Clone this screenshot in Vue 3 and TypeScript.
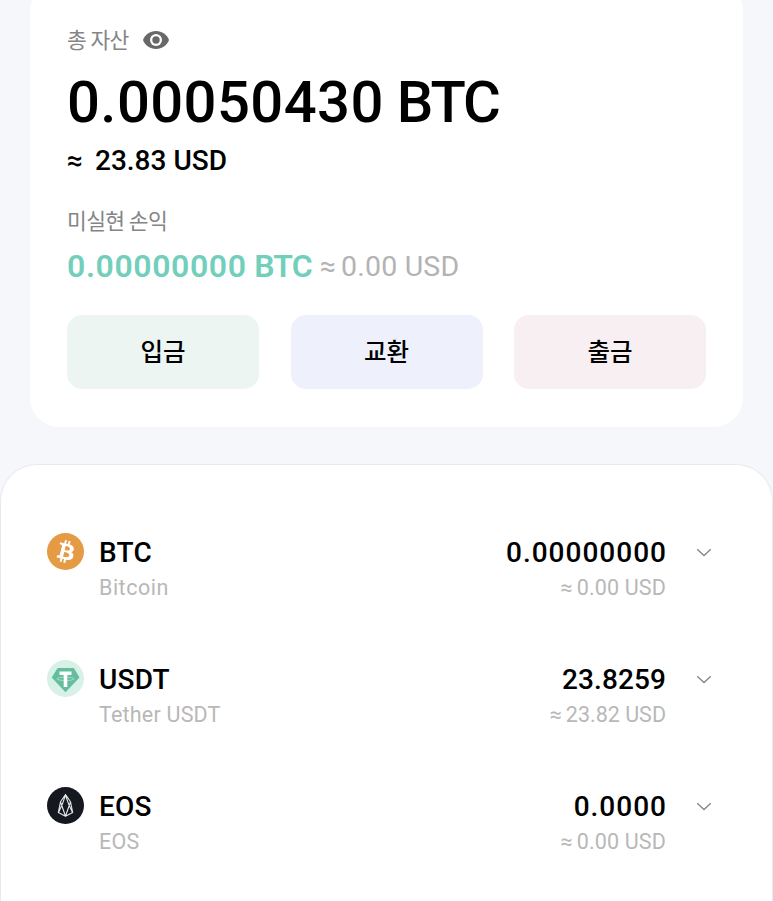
<script setup lang="ts">
type Coin = 'btc' | 'usdt' | 'eos'

interface Asset {
  id: Coin
  symbol: string
  name: string
  amount: string
  value: string
}

interface Action {
  id: string
  label: string
}

const actions: Action[] = [
  { id: 'deposit', label: '입금' },
  { id: 'exchange', label: '교환' },
  { id: 'withdraw', label: '출금' },
]

const assets: Asset[] = [
  { id: 'btc', symbol: 'BTC', name: 'Bitcoin', amount: '0.00000000', value: '0.00 USD' },
  { id: 'usdt', symbol: 'USDT', name: 'Tether USDT', amount: '23.8259', value: '23.82 USD' },
  { id: 'eos', symbol: 'EOS', name: 'EOS', amount: '0.0000', value: '0.00 USD' },
]
</script>

<template>
  <main class="screen">
    <section class="summary">
      <div class="label total-label">
        <span class="label-text">총 자산</span>
        <svg class="eye" viewBox="0 0 26 18">
          <path d="M13 0C7 0 2 3.700 0 9c2 5.300 7 9 13 9s11-3.700 13-9C24 3.700 19 0 13 0z" fill="#686868" />
          <circle cx="13" cy="9" r="6" fill="#fff" />
          <circle cx="13" cy="9" r="3.700" fill="#686868" />
        </svg>
      </div>
      <h1 class="total">0.00050430 <span class="total-unit">BTC</span></h1>
      <p class="total-usd"><span class="approx">≈</span><span>23.83 USD</span></p>
      <div class="label pnl-label"><span class="label-text">미실현 손익</span></div>
      <p class="pnl">
        <strong class="pnl-btc">0.00000000 <span class="pnl-unit">BTC</span></strong>
        <span class="pnl-approx">≈</span>
        <span class="pnl-usd">0.00 USD</span>
      </p>
      <div class="actions">
        <button v-for="a in actions" :key="a.id" type="button" class="action" :class="a.id">{{ a.label }}</button>
      </div>
    </section>

    <section class="assets">
      <article v-for="c in assets" :key="c.id" class="asset" :class="`asset-${c.id}`">
        <svg v-if="c.id === 'btc'" class="coin" viewBox="0 0 32 32">
          <circle cx="16" cy="16" r="16" fill="#e59a44" />
          <path
            fill="#fff"
            d="M23.189 14.020c.314-2.096-1.283-3.223-3.465-3.975l.708-2.840-1.728-.430-.690 2.765c-.454-.114-.920-.220-1.385-.326l.695-2.783L15.596 6l-.708 2.839c-.376-.086-.746-.170-1.104-.260l.002-.009-2.384-.595-.460 1.846s1.283.294 1.256.312c.700.175.826.638.805 1.006l-.806 3.235c.048.012.110.030.180.057l-.183-.045-1.130 4.532c-.086.212-.303.531-.793.410.018.025-1.256-.313-1.256-.313l-.858 1.978 2.250.561c.418.105.828.215 1.231.318l-.715 2.872 1.727.430.708-2.840c.472.127.930.245 1.378.357l-.706 2.828 1.728.430.715-2.866c2.948.558 5.164.333 6.097-2.333.752-2.146-.037-3.385-1.588-4.192 1.130-.260 1.980-1.003 2.207-2.538zm-3.950 5.538c-.533 2.147-4.148.986-5.320.695l.950-3.805c1.172.293 4.929.872 4.370 3.110zm.535-5.569c-.487 1.953-3.495.960-4.470.717l.860-3.450c.975.243 4.118.696 3.610 2.733z"
          />
        </svg>
        <svg v-else-if="c.id === 'usdt'" class="coin" viewBox="0 0 37 37">
          <circle cx="18.500" cy="18.500" r="18.500" fill="#d7f1e7" />
          <path d="M10.600 8h16.200l5.700 9.500-14 14.800L4.700 17.500z" fill="#64bd9e" />
          <ellipse cx="18.500" cy="18.800" rx="8.600" ry="1.700" fill="none" stroke="#b9e3d5" stroke-width=".8" />
          <path d="M12.500 11.500h12v3.400h-4.200V27h-3.600V14.900h-4.200z" fill="#fff" />
        </svg>
        <svg v-else class="coin" viewBox="0 0 37 37">
          <circle cx="18.500" cy="18.500" r="18.500" fill="#15181e" />
          <path
            d="M18.500 7.500l-5 7.300-2.200 10.700 7.200 3.700 7.200-3.700-2.200-10.700zM13.500 14.800l5 14.400 5-14.400M18.500 8l-3.300 9.600-3.600 7.600M18.500 8l3.300 9.600 3.600 7.600"
            fill="none"
            stroke="#e4e6e8"
            stroke-width="1.100"
            stroke-linejoin="round"
          />
        </svg>
        <div class="identity">
          <span class="symbol">{{ c.symbol }}</span>
          <span class="name">{{ c.name }}</span>
        </div>
        <div class="holding">
          <span class="amount">{{ c.amount }}</span>
          <span class="value"><span class="value-approx">≈</span>{{ c.value }}</span>
        </div>
        <svg class="chevron" viewBox="0 0 16 9">
          <path d="M1.200 1.200L8 7.500l6.800-6.300" fill="none" stroke="#858585" stroke-width="1.300" />
        </svg>
      </article>
    </section>
  </main>
</template>

<style>
body {
  margin: 0;
}
</style>

<style scoped>
.screen {
  display: flex;
  flex-direction: column;
  box-sizing: border-box;
  height: 901px;
  overflow: hidden;
  background: #f5f7fb;
  font-family: Roboto, 'Noto Sans CJK KR', sans-serif;
  color: #000;
}

.summary {
  box-sizing: border-box;
  flex: none;
  height: 445px;
  margin: -18px 30px 0;
  padding: 44px 37px 0;
  border-radius: 29px;
  background: #fff;
}

.label {
  display: flex;
  align-items: center;
  height: 28px;
  font-family: 'Noto Sans CJK KR', sans-serif;
  font-size: 21.5px;
  line-height: 28px;
  letter-spacing: -0.6px;
  color: #858585;
}

.label-text {
  padding-bottom: 3px;
}

.eye {
  width: 26px;
  height: 18px;
  margin-left: 14px;
}

.total {
  height: 70px;
  margin: 13px 0 0;
  font-size: 58px;
  line-height: 70px;
  font-weight: 500;
  letter-spacing: 0.4px;
  white-space: nowrap;
}

.total-unit {
  margin-left: -2px;
  letter-spacing: -2px;
}

.total-usd {
  display: flex;
  height: 34px;
  margin: 7px 0 0;
  font-size: 28px;
  line-height: 34px;
  font-weight: 500;
}

.approx {
  width: 28px;
}

.pnl-label {
  margin-top: 29px;
}

.pnl {
  display: flex;
  height: 40px;
  margin: 11px 0 0;
  font-size: 28.5px;
  line-height: 42px;
  letter-spacing: 0.2px;
  color: #b3b3b3;
  white-space: nowrap;
}

.pnl-btc {
  width: 253px;
  font-size: 32px;
  line-height: 40px;
  font-weight: 600;
  letter-spacing: 0.6px;
  color: #72cfbb;
}

.pnl-unit {
  margin-left: -1px;
  letter-spacing: -0.8px;
}

.pnl-approx {
  width: 21px;
}

.actions {
  display: grid;
  grid-template-columns: repeat(3, 192px);
  justify-content: space-between;
  margin-top: 29px;
}

.action {
  height: 74px;
  padding: 0 0 3px;
  border: 0;
  border-radius: 15px;
  font: 500 24.500px/71px 'Noto Sans CJK KR', sans-serif;
  color: #000;
}

.deposit {
  background: #ecf5f2;
}

.exchange {
  background: #eef1fb;
}

.withdraw {
  background: #f8eff3;
}

.assets {
  box-sizing: border-box;
  flex: 1;
  margin-top: 37px;
  padding: 57px 60px 0 46px;
  border: 1px solid #e8eaee;
  border-bottom: 0;
  border-radius: 37px 37px 0 0;
  background: #fff;
}

.asset {
  display: flex;
  height: 127px;
}

.coin {
  flex: none;
  width: 37px;
  height: 37px;
  margin-top: 11px;
}

.identity,
.holding {
  display: flex;
  flex-direction: column;
  padding-top: 13px;
}

.identity {
  margin-left: 15px;
}

.holding {
  align-items: flex-end;
  margin-left: auto;
}

.symbol,
.amount {
  height: 36px;
  font-size: 28px;
  line-height: 36px;
  font-weight: 500;
}

.symbol {
  letter-spacing: 0.2px;
}

.amount {
  margin-right: -1px;
  letter-spacing: 1px;
}

.asset-usdt .amount {
  margin-right: 0;
  letter-spacing: 0.1px;
}

.name,
.value {
  height: 30px;
  margin-top: 2px;
  font-size: 21.5px;
  line-height: 30px;
  color: #b8b8b8;
}

.name {
  letter-spacing: 0.2px;
}

.asset-btc .name {
  letter-spacing: 0.5px;
}

.value {
  letter-spacing: 0.15px;
}

.asset-usdt .value {
  letter-spacing: 0;
}

.value-approx {
  margin-right: 4px;
}

.chevron {
  flex: none;
  width: 16px;
  height: 9px;
  margin: 26px 0 0 30px;
}
</style>
